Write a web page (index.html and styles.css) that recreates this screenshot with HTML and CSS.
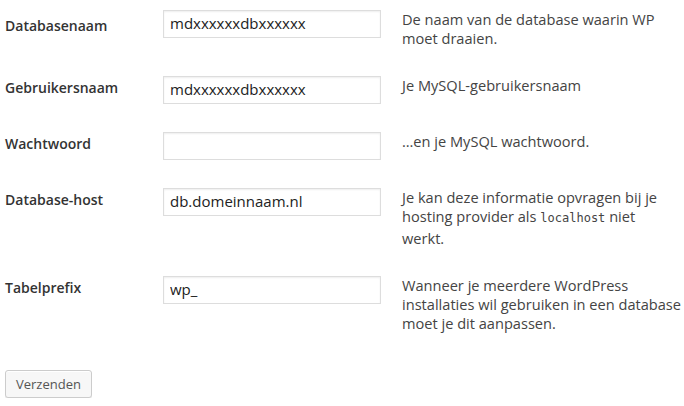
FILE: index.html
```html
<!DOCTYPE html>
<html lang="nl">
<head>
    <meta charset="UTF-8">
    <title>WordPress configuratie</title>
    <link rel="stylesheet" href="styles.css">
</head>
<body>
    <form class="setup-form">
        <div class="field">
            <label class="field-label" for="dbname">Databasenaam</label>
            <div class="field-input"><input type="text" id="dbname" value="mdxxxxxxdbxxxxxx"></div>
            <div class="field-desc">De naam van de database waarin WP<br>moet draaien.</div>
        </div>

        <div class="field">
            <label class="field-label" for="uname">Gebruikersnaam</label>
            <div class="field-input"><input type="text" id="uname" value="mdxxxxxxdbxxxxxx"></div>
            <div class="field-desc">Je MySQL-gebruikersnaam</div>
        </div>

        <div class="field">
            <label class="field-label" for="pwd">Wachtwoord</label>
            <div class="field-input"><input type="text" id="pwd" value=""></div>
            <div class="field-desc">&hellip;en je MySQL wachtwoord.</div>
        </div>

        <div class="field">
            <label class="field-label" for="dbhost">Database-host</label>
            <div class="field-input"><input type="text" id="dbhost" value="db.domeinnaam.nl"></div>
            <div class="field-desc">Je kan deze informatie opvragen bij je<br>hosting provider als <code>localhost</code> niet<br>werkt.</div>
        </div>

        <div class="field">
            <label class="field-label" for="prefix">Tabelprefix</label>
            <div class="field-input"><input type="text" id="prefix" value="wp_"></div>
            <div class="field-desc">Wanneer je meerdere WordPress<br>installaties wil gebruiken in een database<br>moet je dit aanpassen.</div>
        </div>

        <p class="step"><button type="submit" class="button">Verzenden</button></p>
    </form>
</body>
</html>
```

FILE: styles.css
```css
/* General Styling */
body {
    margin: 0;
    padding: 0;
    background-color: #fff;
    font-family: 'Open Sans', sans-serif;
    font-size: 14px;
    color: #444;
}

.setup-form {
    padding-left: 5px;
}

.field {
    display: grid;
    grid-template-columns: 158px 218px 1fr;
    padding-bottom: 18px;
}

.field-label {
    padding-top: 12px;
    line-height: 19px;
    font-weight: 600;
    color: #333;
}

/* first label sits a little lower */
.field:first-child .field-label {
    padding-top: 16px;
}

.field-input {
    padding-top: 10px;
}

.field-input input {
    box-sizing: border-box;
    width: 218px;
    height: 28px;
    margin: 0;
    padding: 0 6px 2px;
    border: 1px solid #ddd;
    box-shadow: inset 0 1px 2px rgba(0, 0, 0, 0.07);
    font-family: 'Open Sans', sans-serif;
    font-size: 15px;
    color: #222;
    outline: none;
}

.field-desc {
    padding: 10px 0 0 21px;
    font-size: 14.6px;
    line-height: 19px;
}

.field-desc code {
    font-family: 'DejaVu Sans Mono', monospace;
    font-size: 12px;
    line-height: 22px;
}

.step {
    margin: 19px 0 0;
}

.button {
    height: 28px;
    padding: 0 10px 1px;
    border: 1px solid #ccc;
    border-radius: 3px;
    background-color: #f7f7f7;
    box-shadow: inset 0 1px 0 #fff, 0 1px 0 rgba(0, 0, 0, 0.08);
    font-family: 'Open Sans', sans-serif;
    font-size: 13px;
    color: #555;
    cursor: pointer;
}
```
